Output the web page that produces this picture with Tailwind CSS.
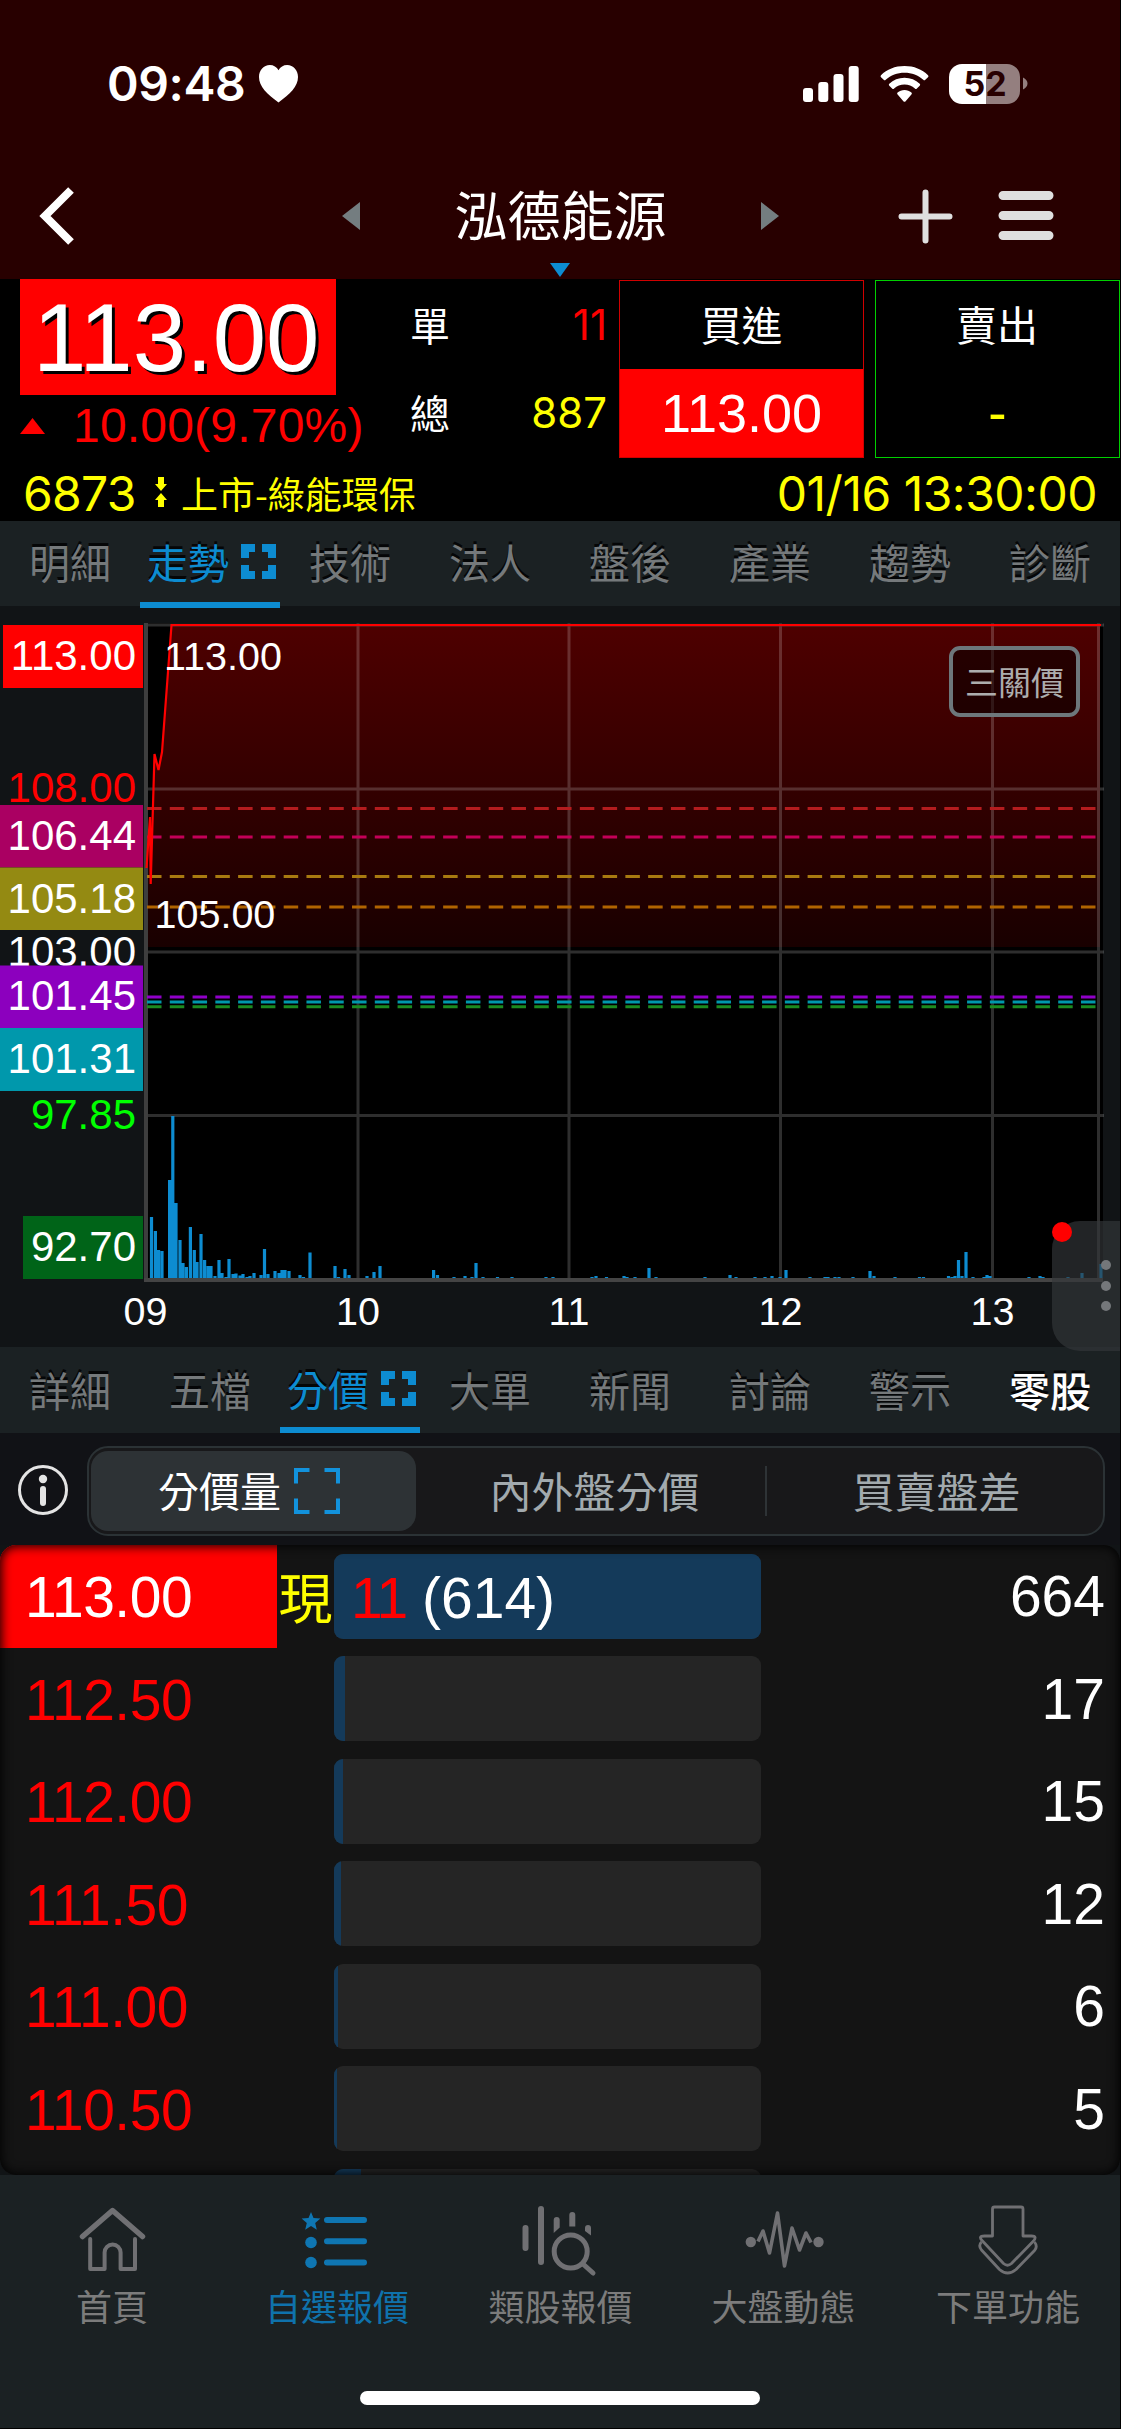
<!DOCTYPE html>
<html lang="zh-Hant">
<head>
<meta charset="utf-8">
<title>泓德能源</title>
<script src="https://cdn.jsdelivr.net/npm/@tailwindcss/browser@4"></script>
</head>
<body class="bg-black">
<div class="flex h-[2429px] w-[1121px] flex-col overflow-hidden border-r border-b border-black bg-[#111416] font-['Noto_Sans_CJK_TC',sans-serif] text-white">

  <!-- status bar and title -->
  <header class="h-[279px] shrink-0 bg-[#280000]">
    <div class="flex h-[160px] items-center justify-between pt-[7px] pr-[92px] pl-[107px]">
      <div class="flex items-center gap-[14px]">
        <span class="font-[Inter,sans-serif] text-[48px] leading-[48px] font-semibold tracking-[-0.4px]">09:48</span>
        <svg class="h-[38px] w-[39px]" viewBox="0 0 39 38"><path fill="#fff" d="M19.500 37.500C8 29 0 21.500 0 12 0 5 4.800 0 10.800 0c3.800 0 7 2 8.700 5.200C21.200 2 24.400 0 28.200 0 34.200 0 39 5 39 12c0 9.500-8 17-19.500 25.500z"/></svg>
      </div>
      <div class="flex items-center gap-[20px]">
        <svg class="h-[36px] w-[57px]" viewBox="0 0 57 36" fill="#fff"><rect x="0" y="22" width="10" height="14" rx="3"/><rect x="15.300" y="16" width="10" height="20" rx="3"/><rect x="30.500" y="8" width="10" height="28" rx="3"/><rect x="45.700" y="0" width="10" height="36" rx="3"/></svg>
        <svg class="h-[36px] w-[49px]" viewBox="0 0 49 36" fill="#fff"><path d="M24.500 0C34 0 42 3.300 48 9.200q1 1 0 2l-2.700 2.600q-1 1-2 0C38.300 9.300 31.700 6.800 24.500 6.800S10.700 9.300 5.700 13.800q-1 1-2 0L1 11.200q-1-1 0-2C7 3.300 15 0 24.500 0z"/><path d="M24.500 11.700c6 0 11.200 2.200 15.200 6q1 1 0 2l-2.800 2.700q-1 1-2 0c-2.800-2.500-6.400-3.900-10.400-3.900s-7.600 1.400-10.400 3.900q-1 1-2 0l-2.800-2.700q-1-1 0-2c4-3.800 9.200-6 15.200-6z"/><path d="M24.500 24c2.600 0 5 .9 6.900 2.500q.9.900 0 1.900l-6 7q-.9.900-1.800 0l-6-7q-.9-1 0-1.900C19.500 24.900 21.900 24 24.500 24z"/></svg>
        <svg class="h-[40px] w-[79px]" viewBox="0 0 79 40"><path fill="#fff" d="M37.500 0v40H13A13 13 0 0 1 0 27V13A13 13 0 0 1 13 0z"/><path fill="#947f7f" d="M37.500 0H58a13 13 0 0 1 13 13v14a13 13 0 0 1-13 13H37.500zM74 13.500q4.500 2.500 4.500 6t-4.500 6z"/><text x="36" y="32" text-anchor="middle" fill="#280000" font-family="Inter,sans-serif" font-weight="700" font-size="34">52</text></svg>
      </div>
    </div>
    <div class="grid h-[119px] grid-cols-[342px_437px_341px]">
      <svg class="mt-[26px] ml-[38px] h-[60px] w-[38px]" viewBox="0 0 38 60" fill="none" stroke="#fff" stroke-width="8"><path d="M33 4 7 30l26 26"/></svg>
      <div class="relative flex items-center justify-between pb-[8px]">
        <svg class="h-[28px] w-[18px]" viewBox="0 0 18 28"><path fill="#747d80" d="M18 0v28L0 14z"/></svg>
        <h1 class="pb-[5px] text-[53px] leading-[60px] font-normal">泓德能源</h1>
        <svg class="h-[28px] w-[18px]" viewBox="0 0 18 28"><path fill="#747d80" d="M0 0v28l18-14z"/></svg>
        <svg class="absolute top-[103px] left-[208px] h-[14px] w-[20px]" viewBox="0 0 20 14"><path fill="#0d8cd1" d="M0 0h20L10 14z"/></svg>
      </div>
      <div class="flex gap-[45px] pt-[29px] pl-[119px]">
        <svg class="h-[56px] w-[55px]" viewBox="0 0 55 56" stroke="#dfdfdf" stroke-width="6" stroke-linecap="round"><path d="M27.500 3.500v48M3.500 27.500h48"/></svg>
        <svg class="h-[56px] w-[56px]" viewBox="0 0 56 56" stroke="#dfdfdf" stroke-width="9" stroke-linecap="round"><path d="M5 6.500h46M5 26.500h46M5 46.500h46"/></svg>
      </div>
    </div>
  </header>

  <!-- quote -->
  <section class="h-[242px] shrink-0 bg-black">
    <div class="flex h-[192px] items-start">
      <div class="w-[400px] pl-[20px]">
        <div class="flex h-[116px] w-[316px] items-center bg-[#ff0000] pt-[2px] pl-[13px] font-['Liberation_Sans',sans-serif] text-[96px] leading-[114px] [text-shadow:3px_3px_0_#000]">113.00</div>
        <div class="flex h-[62px] items-center text-[#ff0000]">
          <svg class="h-[16px] w-[25px]" viewBox="0 0 25 16"><path fill="#f00" d="M12.500 0 25 16H0z"/></svg>
          <span class="ml-[28px] font-['Liberation_Sans',sans-serif] text-[48px] leading-[62px] tracking-[0.2px] whitespace-nowrap">10.00(9.70%)</span>
        </div>
      </div>
      <div class="w-[219px] pr-[12px] pl-[10px]">
        <div class="flex h-[92px] items-center justify-between"><span class="pb-[2px] text-[40px] leading-[40px]">單</span><span class="font-[Inter,sans-serif] text-[42px] leading-[42px] text-[#ff0000]">11</span></div>
        <div class="flex h-[84px] items-center justify-between"><span class="pb-[2px] text-[40px] leading-[40px]">總</span><span class="font-[Inter,sans-serif] text-[42px] leading-[42px] text-[#ffff00]">887</span></div>
      </div>
      <div class="mt-[1px] flex h-[178px] w-[245px] flex-col border border-[#d00000] text-center">
        <div class="h-[88px] text-[41px] leading-[85px]">買進</div>
        <div class="flex-1 bg-[#ff0000] font-['Liberation_Sans',sans-serif] text-[54px] leading-[88px]">113.00</div>
      </div>
      <div class="mt-[1px] ml-[11px] flex h-[178px] w-[245px] flex-col border border-[#00d000] text-center">
        <div class="h-[88px] pr-[1px] text-[41px] leading-[85px]">賣出</div>
        <div class="flex-1 font-['Liberation_Sans',sans-serif] text-[55px] leading-[88px] text-[#ffff00]">-</div>
      </div>
    </div>
    <div class="flex h-[50px] items-center pr-[23px] pl-[23px] text-[#ffff00]">
      <span class="w-[132px] pb-[4px] font-[Inter,sans-serif] text-[48px] leading-[46px] tracking-[-0.7px]">6873</span>
      <svg class="mb-[8px] h-[30px] w-[12px]" viewBox="0 0 12 30" fill="#ff0"><path d="M3 0h6v7h3l-6 7-6-7h3zM3 30h6v-7h3l-6-7-6 7h3z"/></svg>
      <span class="ml-[14px] pb-[7px] text-[37px] leading-[40px]">上市-綠能環保</span>
      <span class="ml-auto pb-[4px] font-[Inter,sans-serif] text-[48px] leading-[46px] tracking-[-0.5px]">01/16 13:30:00</span>
    </div>
  </section>

  <!-- upper tabs -->
  <nav class="grid h-[85px] shrink-0 grid-cols-8 bg-[#1b2123] text-center text-[41px] leading-[81px] text-[#75797b] [text-shadow:0_-3px_0_#050607]">
    <div>明細</div>
    <div class="flex items-center justify-center gap-[12px] border-b-[6px] border-[#0d8cd1] pl-[3px] text-[#0d8cd1]">走勢<svg class="h-[35px] w-[35px]" viewBox="0 0 35 35" fill="none" stroke="#0d8cd1" stroke-width="8"><path d="M4 14V4h10M21 4h10v10M31 21v10H21M14 31H4V21"/></svg></div>
    <div>技術</div><div>法人</div><div>盤後</div><div>產業</div><div>趨勢</div><div>診斷</div>
  </nav>

  <!-- intraday chart -->
  <section class="relative h-[741px] shrink-0">
    <svg id="chart" class="block h-[741px] w-[1120px] font-['Liberation_Sans',sans-serif]" viewBox="0 606 1120 741">
      <defs><linearGradient id="fall" x1="0" y1="0" x2="0" y2="1"><stop offset="0" stop-color="#4e0000"/><stop offset="1" stop-color="#190000"/></linearGradient></defs>
      <rect x="146" y="623" width="957" height="657" fill="#000"/>
      <path fill="url(#fall)" d="M147 867 150 817 150.700 884 154.500 754 158.500 770 162 752 171.500 625H1100V947H147z"/>
      <g stroke="#fff" stroke-opacity=".18" stroke-width="3"><path d="M148 625H1104M148 789H1104M148 952H1104M148 1115.500H1104M358 623V1280M569 623V1280M780.500 623V1280M992.500 623V1280M1098.500 623V1280"/></g>
      <path id="volume" stroke="#0d8cd1" stroke-width="3.200"/>
      <path d="M146 623V1282" stroke="#3e3e3e" stroke-width="4"/><path d="M144 1280H1103" stroke="#444" stroke-width="4"/>
      <g stroke-width="3" stroke-dasharray="14.500 8.280">
        <path stroke="#b41c1e" d="M147 808.500H1098"/><path stroke="#c40058" d="M147 837H1098"/><path stroke="#a87a10" d="M147 876.500H1098"/><path stroke="#b06400" d="M147 907H1098"/>
        <path stroke="#9000c8" d="M147 997H1098"/><path stroke="#0098ac" d="M147 1002H1098"/><path stroke="#1c8c20" d="M147 1006.700H1098"/>
      </g>
      <path fill="none" stroke="#f00" stroke-width="2.200" d="M146.500 868 150 817 150.700 884 154.500 754 158.500 770 162 752 171.500 625H1101"/>
      <g font-size="39.500" fill="#fff"><text x="164" y="670">113.00</text><text x="154.500" y="928">105.00</text></g>
      <g font-size="42" text-anchor="end" fill="#fff">
        <path fill="#f00" d="M3 625h140v63H3z"/><text x="136" y="670">113.00</text>
        <text x="136" y="802" fill="#f00">108.00</text>
        <text x="136" y="965.500">103.00</text>
        <path fill="#aa0062" d="M0 805h143v62.500H0z"/><text x="136" y="849.500">106.44</text>
        <path fill="#948a12" d="M0 867.500h143v62.500H0z"/><text x="136" y="912.500">105.18</text>
        <path fill="#8c00be" d="M0 965.500h143v62.500H0z"/><text x="136" y="1010">101.45</text>
        <path fill="#0098ac" d="M0 1028h143v63H0z"/><text x="136" y="1073">101.31</text>
        <text x="136" y="1129" fill="#0f0">97.85</text>
        <path fill="#006418" d="M23 1216h120v63H23z"/><text x="136" y="1261">92.70</text>
      </g>
      <g font-size="39.500" text-anchor="middle" fill="#fff"><text x="145.500" y="1325">09</text><text x="358" y="1325">10</text><text x="569" y="1325">11</text><text x="780.500" y="1325">12</text><text x="992.500" y="1325">13</text></g>
    </svg>
    <button class="absolute top-[40px] left-[949px] h-[71px] w-[131px] rounded-[11px] border-4 border-[#6d777b] bg-black/50 pb-[2px] text-[33px] leading-[56px] text-[#adadad]">三關價</button>
    <div class="absolute top-[615px] left-[1052px] h-[130px] w-[68px] rounded-l-[28px] bg-[#34383a]/65">
      <div class="absolute top-[1px] left-0 h-5 w-5 rounded-full bg-[#ff0000]"></div>
      <div class="absolute top-[39px] left-[49px] flex flex-col gap-[10.500px]"><i class="size-[10px] rounded-full bg-[#74777a]"></i><i class="size-[10px] rounded-full bg-[#74777a]"></i><i class="size-[10px] rounded-full bg-[#74777a]"></i></div>
    </div>
  </section>

  <!-- lower tabs -->
  <nav class="grid h-[86px] shrink-0 grid-cols-8 bg-[#1b2123] text-center text-[41px] leading-[84px] text-[#75797b] [text-shadow:0_-3px_0_#050607]">
    <div>詳細</div><div>五檔</div>
    <div class="flex h-[86px] items-center justify-center gap-[12px] border-b-[6px] border-[#0d8cd1] pt-[3px] pl-[3px] leading-[77px] text-[#0d8cd1]">分價<svg class="h-[35px] w-[35px]" viewBox="0 0 35 35" fill="none" stroke="#0d8cd1" stroke-width="8"><path d="M4 14V4h10M21 4h10v10M31 21v10H21M14 31H4V21"/></svg></div>
    <div>大單</div><div>新聞</div><div>討論</div><div>警示</div><div class="font-medium text-white">零股</div>
  </nav>

  <!-- segmented control -->
  <section class="flex h-[112px] shrink-0 items-start bg-[#111216] pt-[13px] pl-[18px]">
    <svg class="mt-[19px] h-[50px] w-[50px]" viewBox="0 0 50 50"><circle cx="25" cy="25" r="23.500" fill="none" stroke="#e4e4e4" stroke-width="3"/><circle cx="25" cy="14" r="4.200" fill="#e4e4e4"/><path d="M25 24v14" stroke="#e4e4e4" stroke-width="6" stroke-linecap="round"/></svg>
    <div class="ml-[19px] flex h-[90px] w-[1018px] items-center rounded-[21px] border-2 border-[#2b3235] bg-[#18181a] pl-[2px] text-[42px] leading-[73px] text-[#a2aaae]">
      <div class="flex h-[80px] w-[325px] items-center justify-center gap-[13px] rounded-[17px] bg-[#2d3235] pr-[9px] text-white"><span class="pb-[3px] text-[41px]">分價量</span><svg class="h-[46px] w-[46px]" viewBox="0 0 46 46" fill="none" stroke="#1292dc" stroke-width="4"><path d="M2 15.500V2h13.500M30.500 2H44v13.500M44 30.500V44H30.500M15.500 44H2V30.500"/></svg></div>
      <div class="ml-[5px] w-[344px] pb-[3px] pl-[3px] text-center">內外盤分價</div>
      <div class="h-[50px] w-[2px] bg-[#2e3336]"></div>
      <div class="flex-1 pb-[3px] pl-[3px] text-center">買賣盤差</div>
    </div>
  </section>

  <!-- volume by price -->
  <section class="relative h-[630px] shrink-0 overflow-hidden rounded-[16px] bg-[#141414] font-['Liberation_Sans','Noto_Sans_CJK_TC',sans-serif] text-[57px] leading-[104px]">
    <div id="rows"></div>
    <div class="pointer-events-none absolute inset-0 rounded-[16px] shadow-[inset_0_0_11px_1px_#000]"></div>
  </section>

  <!-- bottom navigation -->
  <footer class="h-[253px] shrink-0 bg-[#1b2123]">
    <div class="grid h-[216px] grid-cols-[224px_226px_221px_225px_224px] text-center text-[36px] leading-[46px] text-[#7c7c7c]">
      <div class="flex flex-col items-center pt-[27px]"><svg class="h-[80px] w-[80px]" viewBox="72 2202 80 80" fill="none" stroke="#707073" stroke-linecap="round" stroke-linejoin="round"><path stroke-width="5.500" d="M82.500 2236.500 112.500 2210.500 142.500 2236.500"/><path stroke-width="4" d="M90.200 2239V2269H104.600V2252.500a8 8 0 0 1 16 0V2269H135V2239"/></svg><span>首頁</span></div>
      <div class="flex flex-col items-center pt-[27px] text-[#0f72ac]"><svg class="h-[80px] w-[80px]" viewBox="297 2202 80 80" fill="#0f76b2"><path d="M311 2212l2.500 6 6.900.500-5.200 4.500 1.600 6.700-5.800-3.600-5.800 3.600 1.600-6.700-5.200-4.500 6.900-.500z"/><circle cx="311" cy="2242.500" r="5.800"/><circle cx="311" cy="2262.500" r="5.800"/><path stroke="#0f76b2" stroke-width="6" stroke-linecap="round" d="M327 2220h37M327 2241.300h37M327 2262.600h37"/></svg><span>自選報價</span></div>
      <div class="flex flex-col items-center pt-[27px]"><svg class="h-[80px] w-[80px]" viewBox="521 2202 80 80" fill="#707073" stroke="#707073" stroke-linecap="round"><path stroke-width="6" d="M525.500 2228v20M541 2209v53"/><path stroke="none" d="M553.700 2220a3 3 0 0 1 6 0v7.500l-6 5.500zM569.300 2215a3 3 0 0 1 6 0v11.500h-6zM585 2228a3 3 0 0 1 6 0v7.500l-6-4.500z"/><circle cx="570.700" cy="2251.500" r="16.500" fill="none" stroke-width="5"/><path stroke-width="5" d="M583 2264l10 9"/></svg><span>類股報價</span></div>
      <div class="flex flex-col items-center pt-[27px]"><svg class="h-[80px] w-[80px]" viewBox="743.500 2202 80 80" fill="none" stroke="#707073" stroke-width="3.600" stroke-linejoin="round"><circle cx="750.300" cy="2242" r="5.200" fill="#707073" stroke="none"/><circle cx="818" cy="2242" r="5.200" fill="#707073" stroke="none"/><path d="M757.500 2241.500l5-10.500 6.500 22 8-40 7 53 7.500-38 7.500 22 6.500-17 5 9.500"/></svg><span>大盤動態</span></div>
      <div class="flex flex-col items-center pt-[27px]"><svg class="h-[80px] w-[80px]" viewBox="967.500 2202 80 80" fill="none" stroke="#707073" stroke-width="2.800" stroke-linejoin="round"><path d="M992 2236v-27q0-2 2-2h26.500q2 0 2 2v27h8.500q6 0 2 5l-22 22.500q-4 3.500-8 0l-21-22.500q-5-5 2-5z"/><path d="M981 2242q-3.500 3.500 0 8l18 19.500q8 7 16.500 0l18.500-19q3.500-4 0-8.500"/></svg><span>下單功能</span></div>
    </div>
    <div class="mx-auto h-[14px] w-[400px] rounded-full bg-white"></div>
  </footer>
</div>
<script>
  // [x, height] of each per-minute volume bar
  const volume = [[151.5,62],[155.4,48],[158.6,29],[162,28],[169.600,99],[172.8,163],[176,76],[180,39],[183,16],[186.4,12],[190.4,52],[194.3,29],[197,17],[201,45],[204.6,19],[208,13],[211,13],[215,3],[219,19],[222,6],[226,2],[229,20],[233,5],[236,5.500],[240,3.500],[243,5],[247,2],[250,3],[254,6],[261,4],[264.5,30],[268,5],[275,8],[279,6],[282,9],[285,9],[289,8],[300,4],[303.5,2],[310,26.5],[335,13],[338.5,2],[345,10],[349,4],[367,3],[374,7],[380,13],[433.6,9],[437.5,4],[454,2],[465,3],[472,2],[476,16],[483,2],[497.5,2],[512,2],[546,2],[553,2],[592,2],[596,3],[606.5,2],[624,3],[627,2],[635,2],[649,11],[656,2],[705,2],[730,4],[736,2],[755,2],[765,2],[772,3],[780,2],[786,9],[810,2],[825,2],[828,2],[835,2],[839,2],[853,2],[870,8],[874,3],[895,2],[919.5,2],[923.5,2],[948.5,3],[952,2],[955,3],[958.5,19],[962,3],[966,27],[973,2],[984,2],[987,4],[990,3],[1029,2],[1040,3],[1043,2],[1068,2],[1082,6],[1101,15]];
  document.getElementById('volume').setAttribute('d', volume.map(([x, h]) => `M${x} 1279v-${h}`).join(''));

  // [price, filled bar width, total]
  const levels = [['113.00',427,664],['112.50',11,17],['112.00',9,15],['111.50',7,12],['111.00',4,6],['110.50',3,5],['',27,'']];
  document.getElementById('rows').innerHTML = levels.map(([price, fill, total], i) => `
    <div class="flex h-[102.500px] items-center pr-[15px]">
      <div class="h-full w-[277px] shrink-0 pl-[25px] tracking-[-0.5px] ${i ? 'text-[#ff0000]' : 'bg-[#ff0000]'}">${price}</div>
      <div class="w-[57px] shrink-0 text-center font-['Noto_Sans_CJK_TC',sans-serif] text-[54px] leading-[94px] text-[#ffff00]">${i ? '' : '現'}</div>
      <div class="relative h-[85px] w-[427px] overflow-hidden rounded-[9px] bg-[#252525] leading-[88px]">
        <div class="absolute inset-y-0 left-0 bg-[#143a5a]" style="width:${fill}px"></div>
        ${i ? '' : '<div class="relative flex gap-[15px] pl-[17px]"><span class="w-[56px] tracking-[-2px] text-[#ff0000]">11</span><span>(614)</span></div>'}
      </div>
      <div class="ml-auto">${total}</div>
    </div>`).join('');
</script>
</body>
</html>
